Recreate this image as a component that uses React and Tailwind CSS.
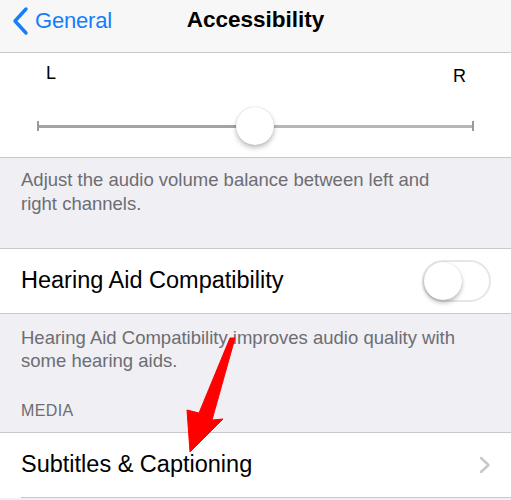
function Toggle() {
  return (
    <div className="relative w-[69px] h-[42px] rounded-full border-2 border-[#e6e6e6] bg-white">
      <div className="absolute left-0 top-0 w-[38px] h-[38px] rounded-full bg-white shadow-[0_3px_4px_rgba(0,0,0,0.25),0_0_1px_rgba(0,0,0,0.2)]" />
    </div>
  );
}

function BalanceSlider() {
  return (
    <div className="bg-white h-[104px] px-[37px] pt-[7px]">
      <div className="flex justify-between text-[18px] text-black pl-[9px] pr-[8px]">
        <span>L</span>
        <span className="mt-[3px]">R</span>
      </div>
      <div className="relative h-[40px] mt-[16px] flex items-center">
        <div className="w-[2px] h-[10px] bg-[#9a9a9a]" />
        <div className="flex-1 flex h-[3px]">
          <div className="w-[216px] bg-[#a3a3a3]" />
          <div className="flex-1 bg-[#b6b6b6]" />
        </div>
        <div className="w-[2px] h-[10px] bg-[#9a9a9a]" />
        <div className="absolute left-[199px] top-[1px] w-[38px] h-[38px] rounded-full bg-white shadow-[0_3px_5px_rgba(0,0,0,0.25),0_0_1px_rgba(0,0,0,0.25)]" />
      </div>
    </div>
  );
}

export default function App() {
  return (
    <div
      className="relative w-[511px] h-[500px] overflow-hidden bg-[#efeff4]"
      style={{ fontFamily: '"Liberation Sans", Arial, sans-serif' }}
    >
      {/* nav */}
      <div className="relative h-[53px] bg-[#f7f7f8] border-b border-[#c8c7cc]">
        <div className="absolute left-[12px] top-[6px] flex items-center text-[#157efb]">
          <svg width="18" height="30" viewBox="0 0 18 30">
            <path d="M14 3 L3 15 L14 27" fill="none" stroke="#157efb" strokeWidth="3.4" strokeLinecap="round" strokeLinejoin="round" />
          </svg>
          <span className="text-[22px] ml-[5px] leading-[30px] tracking-[-0.2px]">General</span>
        </div>
        <div className="absolute inset-x-0 top-[5px] text-center text-[22.5px] leading-[30px] font-bold text-black">
          Accessibility
        </div>
      </div>

      <BalanceSlider />

      <div className="border-t border-[#c8c7cc] h-[91px] px-[21px] pt-[10px] text-[18.5px] leading-[24px] text-[#6d6d72]">
        Adjust the audio volume balance between left and
        <br />
        right channels.
      </div>

      <div className="bg-white border-y border-[#c8c7cc] h-[66px] flex items-center justify-between pl-[21px] pr-[20px]">
        <span className="text-[23.5px] text-black">Hearing Aid Compatibility</span>
        <Toggle />
      </div>

      <div className="h-[118px] px-[21px] pt-[12px] text-[18.5px] leading-[23px] text-[#6d6d72]">
        <div>
          Hearing Aid Compatibility improves audio quality with
          <br />
          some hearing aids.
        </div>
        <div className="mt-[27px] text-[16px] tracking-wide">MEDIA</div>
      </div>

      <div className="bg-white border-t border-[#c8c7cc]">
        <div className="h-[65px] ml-[21px] border-b border-[#c8c7cc] flex items-center justify-between pr-[20px]">
          <span className="text-[23.5px] text-black">Subtitles &amp; Captioning</span>
          <svg width="12" height="18" viewBox="0 0 12 18">
            <path d="M2 2 L9.5 9 L2 16" fill="none" stroke="#c7c7cc" strokeWidth="2.4" strokeLinecap="round" strokeLinejoin="round" />
          </svg>
        </div>
      </div>

      {/* annotation arrow */}
      <svg className="absolute left-0 top-0 pointer-events-none" width="511" height="500">
        <polygon
          points="230,338 235,338 212,420 223,419 190,452 187,410 199,413"
          fill="#ff0000"
          stroke="#ff0000"
          strokeWidth="1"
          strokeLinejoin="round"
        />
      </svg>
    </div>
  );
}
